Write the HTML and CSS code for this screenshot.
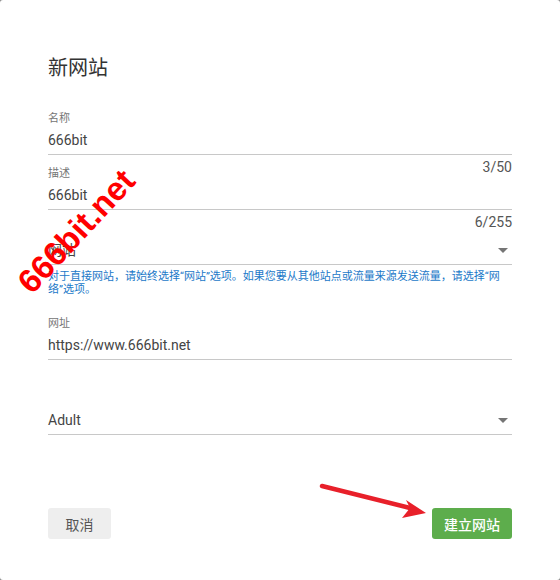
FILE: index.html
```html
<!DOCTYPE html>
<html lang="zh-CN">
<head>
<meta charset="utf-8">
<title>新网站</title>
<link rel="stylesheet" href="styles.css">
</head>
<body>
<div class="dialog">
  <h2 class="title">新网站</h2>

  <div class="field f-name">
    <span class="label">名称</span>
    <span class="value">666bit</span>
    <span class="counter">3/50</span>
  </div>

  <div class="field f-desc">
    <span class="label">描述</span>
    <span class="value">666bit</span>
    <span class="counter">6/255</span>
  </div>

  <div class="field select f-type">
    <span class="value">网站</span>
    <span class="caret"></span>
  </div>
  <p class="helper">对于直接网站，请始终选择“网站”选项。如果您要从其他站点或流量来源发送流量，请选择“网络”选项。</p>

  <div class="field f-url">
    <span class="label">网址</span>
    <span class="value">https://www.666bit.net</span>
  </div>

  <div class="field select f-cat">
    <span class="value">Adult</span>
    <span class="caret"></span>
  </div>

  <div class="actions">
    <button class="btn btn-cancel">取消</button>
    <button class="btn btn-create">建立网站</button>
  </div>

  <span class="watermark">666bit.net</span>
  <svg class="arrow" width="560" height="580" viewBox="0 0 560 580">
    <line x1="322" y1="486" x2="410" y2="508" stroke="#e8202a" stroke-width="4.5" stroke-linecap="round"/>
    <polygon points="426,513 406,500 410,508 402,518" fill="#e8202a"/>
  </svg>
</div>
</body>
</html>
```

FILE: styles.css
```css
body {
  margin: 0;
  background: #8a8a8a;
  font-family: Roboto, "Noto Sans CJK SC", sans-serif;
}

.dialog {
  position: relative;
  width: 560px;
  height: 580px;
  box-sizing: border-box;
  background: #fff;
  border-radius: 3px;
  padding: 54px 48px 0;
  display: flex;
  flex-direction: column;
}

.title {
  margin: 0;
  font-size: 20px;
  line-height: 28px;
  font-weight: 400;
  color: #333;
}

.field {
  position: relative;
  display: flex;
  flex-direction: column;
  border-bottom: 1px solid #c8c8c8;
  padding-bottom: 4px;
}

.label {
  font-size: 11px;
  line-height: 14px;
  color: #757575;
}

.value {
  font-size: 14px;
  line-height: 20px;
  color: #444;
  margin-top: 4px;
}

.counter {
  position: absolute;
  right: 0;
  top: calc(100% + 3px);
  font-size: 14px;
  line-height: 20px;
  color: #555;
}

.select {
  flex-direction: row;
  align-items: center;
  justify-content: space-between;
}

.select .value {
  margin-top: 0;
}

.caret {
  width: 0;
  height: 0;
  border-left: 5px solid transparent;
  border-right: 5px solid transparent;
  border-top: 5px solid #757575;
  margin-right: 4px;
}

.f-name { margin-top: 30px; }
.f-desc { margin-top: 12px; }
.f-type { margin-top: 30px; }

.helper {
  margin: 5px 0 0;
  max-width: 458px;
  font-size: 11px;
  line-height: 13px;
  color: #1a78c8;
}

.f-url { margin-top: 21px; }
.f-cat { margin-top: 50px; }

.actions {
  margin-top: 73px;
  display: flex;
  justify-content: space-between;
}

.btn {
  height: 31px;
  border: 0;
  border-radius: 3px;
  font-family: Roboto, "Noto Sans CJK SC", sans-serif;
  font-size: 14px;
  cursor: pointer;
}

.btn-cancel {
  padding: 0 17px;
  width: 63px;
  background: #eeeeee;
  color: #555;
}

.btn-create {
  width: 80px;
  padding: 0;
  background: #5dad4c;
  color: #fff;
  font-weight: 500;
}

.watermark {
  position: absolute;
  left: 76px;
  top: 231px;
  transform: translate(-50%, -50%) rotate(-47deg);
  white-space: nowrap;
  font-family: "Liberation Sans", Arial, sans-serif;
  font-weight: 700;
  font-size: 33px;
  line-height: 1;
  color: #ff0000;
}

.arrow {
  position: absolute;
  left: 0;
  top: 0;
  pointer-events: none;
}
```
